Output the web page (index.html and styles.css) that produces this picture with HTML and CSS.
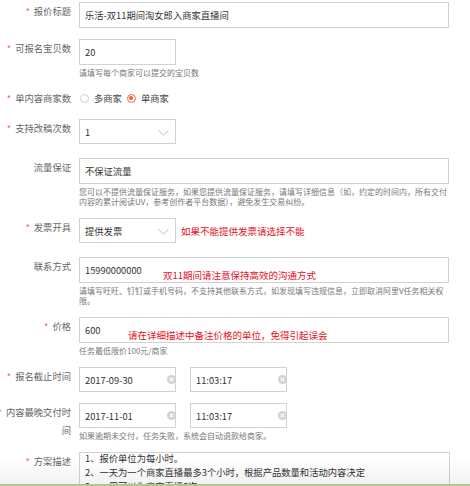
FILE: index.html
```html
<!DOCTYPE html>
<html lang="zh-CN">
<head>
    <meta charset="UTF-8">
    <meta name="viewport" content="width=device-width, initial-scale=1.0">
    <title>报价信息</title>
    <link rel="stylesheet" href="styles.css">
</head>
<body>
    <form class="form">
        <div class="row">
            <label class="label"><i class="star">*</i>报价标题</label>
            <div class="field">
                <input class="input" type="text" value="乐活-双11期间淘女郎入商家直播间">
            </div>
        </div>

        <div class="row">
            <label class="label"><i class="star">*</i>可报名宝贝数</label>
            <div class="field">
                <input class="input input-short" type="text" value="20">
                <p class="hint">请填写每个商家可以提交的宝贝数</p>
            </div>
        </div>

        <div class="row row-radio">
            <label class="label"><i class="star">*</i>单内容商家数</label>
            <div class="field radios">
                <span class="radio"></span><span class="radio-text">多商家</span>
                <span class="radio checked"></span><span class="radio-text">单商家</span>
            </div>
        </div>

        <div class="row row-select">
            <label class="label"><i class="star">*</i>支持改稿次数</label>
            <div class="field">
                <div class="select">
                    <span>1</span>
                    <svg class="arrow" width="11" height="6" viewBox="0 0 11 6"><polyline points="0.5,0.5 5.5,5 10.5,0.5" fill="none" stroke="#bdbdbd" stroke-width="1"/></svg>
                </div>
            </div>
        </div>

        <div class="row">
            <label class="label">流量保证</label>
            <div class="field">
                <input class="input" type="text" value="不保证流量">
                <p class="hint">您可以不提供流量保证服务，如果您提供流量保证服务，请填写详细信息（如，约定的时间内，所有交付内容的累计阅读UV，参考创作者平台数据），避免发生交易纠纷。</p>
            </div>
        </div>

        <div class="row row-select">
            <label class="label"><i class="star">*</i>发票开具</label>
            <div class="field inline">
                <div class="select">
                    <span>提供发票</span>
                    <svg class="arrow" width="11" height="6" viewBox="0 0 11 6"><polyline points="0.5,0.5 5.5,5 10.5,0.5" fill="none" stroke="#bdbdbd" stroke-width="1"/></svg>
                </div>
                <span class="red">如果不能提供发票请选择不能</span>
            </div>
        </div>

        <div class="row">
            <label class="label">联系方式</label>
            <div class="field">
                <div class="input-wrap">
                    <input class="input" type="text" value="15990000000">
                    <span class="red note note-contact">双11期间请注意保持高效的沟通方式</span>
                </div>
                <p class="hint">请填写旺旺、钉钉或手机号码，不支持其他联系方式，如发现填写违规信息，立即取消阿里V任务相关权限。</p>
            </div>
        </div>

        <div class="row">
            <label class="label"><i class="star">*</i>价格</label>
            <div class="field">
                <div class="input-wrap">
                    <input class="input" type="text" value="600">
                    <span class="red note note-price">请在详细描述中备注价格的单位，免得引起误会</span>
                </div>
                <p class="hint">任务最低限价100元/商家</p>
            </div>
        </div>

        <div class="row">
            <label class="label"><i class="star">*</i>报名截止时间</label>
            <div class="field">
                <div class="datetime">
                    <div class="input-wrap">
                        <input class="input input-date" type="text" value="2017-09-30">
                        <span class="clear"><svg width="9" height="9" viewBox="0 0 9 9"><circle cx="4.5" cy="4.5" r="4.5" fill="#d3d3d3"/><path d="M2.8 2.8L6.2 6.2M6.2 2.8L2.8 6.2" stroke="#fff" stroke-width="1.2"/></svg></span>
                    </div>
                    <div class="input-wrap">
                        <input class="input input-date" type="text" value="11:03:17">
                        <span class="clear"><svg width="9" height="9" viewBox="0 0 9 9"><circle cx="4.5" cy="4.5" r="4.5" fill="#d3d3d3"/><path d="M2.8 2.8L6.2 6.2M6.2 2.8L2.8 6.2" stroke="#fff" stroke-width="1.2"/></svg></span>
                    </div>
                </div>
            </div>
        </div>

        <div class="row">
            <label class="label"><i class="star">*</i>内容最晚交付时<br>间</label>
            <div class="field">
                <div class="datetime">
                    <div class="input-wrap">
                        <input class="input input-date" type="text" value="2017-11-01">
                        <span class="clear"><svg width="9" height="9" viewBox="0 0 9 9"><circle cx="4.5" cy="4.5" r="4.5" fill="#d3d3d3"/><path d="M2.8 2.8L6.2 6.2M6.2 2.8L2.8 6.2" stroke="#fff" stroke-width="1.2"/></svg></span>
                    </div>
                    <div class="input-wrap">
                        <input class="input input-date" type="text" value="11:03:17">
                        <span class="clear"><svg width="9" height="9" viewBox="0 0 9 9"><circle cx="4.5" cy="4.5" r="4.5" fill="#d3d3d3"/><path d="M2.8 2.8L6.2 6.2M6.2 2.8L2.8 6.2" stroke="#fff" stroke-width="1.2"/></svg></span>
                    </div>
                </div>
                <p class="hint">如果逾期未交付，任务失败，系统会自动退款给商家。</p>
            </div>
        </div>

        <div class="row">
            <label class="label"><i class="star">*</i>方案描述</label>
            <div class="field">
                <div class="textarea">
                    <p>1、报价单位为每小时。<br>2、一天为一个商家直播最多3个小时，根据产品数量和活动内容决定<br>3、一周可以为商家直播5次</p>
                </div>
            </div>
        </div>
    </form>

    <div class="bottom-bar"></div>
</body>
</html>
```

FILE: styles.css
```css
body {
    margin: 0;
    background-color: #fff;
    font-family: "Noto Sans CJK SC", "Noto Sans", sans-serif;
    font-size: 9.3px;
    color: #333;
    overflow: hidden;
}
.form {
    width: 450px;
    padding-top: 2px;
}
.row {
    display: flex;
    margin-bottom: 11px;
}
.row-radio {
    align-items: center;
    margin-bottom: 12px;
}
.row-select {
    margin-bottom: 14px;
}
.label {
    flex: none;
    width: 75px;
    margin-left: -4px;
    text-align: right;
    line-height: 18px;
    color: #666;
    white-space: nowrap;
}
.star {
    font-style: normal;
    color: #ef6b6b;
    margin-right: 4px;
}
.field {
    margin-left: 8px;
    width: 370px;
}
.input {
    display: block;
    width: 100%;
    height: 26px;
    box-sizing: border-box;
    margin: 0;
    padding: 0 5px;
    border: 1px solid #d2d2d2;
    border-radius: 0;
    font-family: inherit;
    font-size: 9.3px;
    color: #333;
    background: #fff;
    outline: none;
}
.input-short {
    width: 97px;
}
.input-wrap {
    position: relative;
}
.hint {
    margin: 3px 0 0;
    font-size: 8px;
    line-height: 10px;
    color: #777;
}
.radios {
    display: flex;
    align-items: center;
}
.radio {
    width: 9px;
    height: 9px;
    box-sizing: border-box;
    margin-left: 1px;
    border: 1px solid #cfcfcf;
    border-radius: 50%;
    display: flex;
    align-items: center;
    justify-content: center;
}
.radio.checked {
    border-color: #f4663f;
}
.radio.checked::after {
    content: "";
    width: 4px;
    height: 4px;
    border-radius: 50%;
    background-color: #f05a2e;
}
.radio-text {
    margin-left: 5px;
    margin-right: 4px;
    color: #444;
}
.inline {
    display: flex;
    align-items: center;
}
.select {
    width: 97px;
    height: 25px;
    box-sizing: border-box;
    border: 1px solid #d2d2d2;
    padding: 0 6px 0 5px;
    display: flex;
    align-items: center;
    justify-content: space-between;
}
.arrow {
    margin-top: 2px;
}
.red {
    color: #e5101d;
    font-size: 9.5px;
}
.inline .red {
    margin-left: 5px;
}
.note {
    position: absolute;
    top: 12px;
    line-height: 12px;
}
.note-contact {
    left: 84px;
}
.note-price {
    left: 49px;
}
.datetime {
    display: flex;
    gap: 14px;
}
.input-date {
    width: 97px;
    height: 25px;
}
.clear {
    position: absolute;
    right: 0;
    top: 8px;
    width: 9px;
    height: 9px;
    line-height: 0;
}
.textarea {
    width: 371px;
    height: 60px;
    box-sizing: border-box;
    border: 1px solid #d2d2d2;
    padding: 0 5px;
    overflow: hidden;
}
.textarea p {
    margin: -2px 0 0;
    line-height: 14px;
    color: #333;
}
.bottom-bar {
    position: fixed;
    left: 0;
    right: 0;
    bottom: 0;
    height: 26px;
    background: linear-gradient(rgba(0,0,0,0), rgba(0,0,0,0.05));
    border-bottom: 2px solid #b7c48e;
}
```
